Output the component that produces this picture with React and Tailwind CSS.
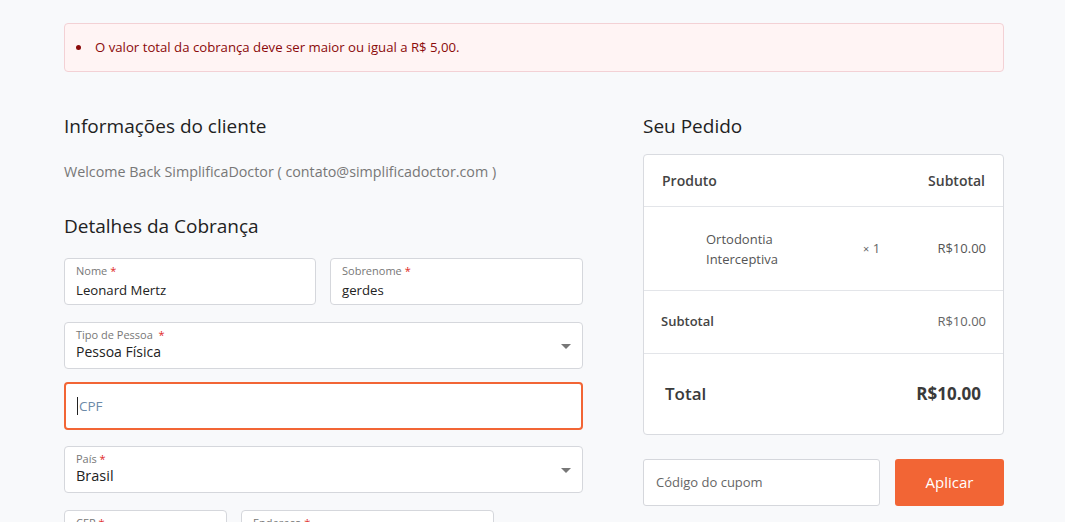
import React from "react";

const font = { fontFamily: '"Open Sans", "Noto Sans", sans-serif' };

function Field({ label, value, className = "", valueClass = "text-[13.2px] mt-[3px]", select = false }) {
  return (
    <div className={`relative h-[47px] rounded-[4px] border border-[#d5d7dc] bg-white px-[11px] pt-[5px] ${className}`}>
      <div className="text-[11px] leading-[14px] text-[#777]">
        {label} <span className="text-[#e0281e]">*</span>
      </div>
      <div className={`leading-[18px] text-[#222] ${valueClass}`}>{value}</div>
      {select && (
        <div className="absolute right-[11px] top-[21px] h-0 w-0 border-x-[5px] border-t-[5px] border-x-transparent border-t-[#777]" />
      )}
    </div>
  );
}

export default function App() {
  return (
    <div className="h-[522px] overflow-hidden bg-[#f8f9fb]" style={font}>
      <div className="px-[64px] pt-[23px]">
        <div className="flex h-[49px] w-[940px] items-center rounded-[4px] border border-[#f3d1d5] bg-[#fff4f4] pl-[11px] text-[13.2px] text-[#8b0a0a]">
          <span className="mr-[14px] inline-block h-[5px] w-[5px] rounded-full bg-[#8b0a0a]" />
          O valor total da cobrança deve ser maior ou igual a R$ 5,00.
        </div>

        <div className="mt-[42px] flex gap-[60px]">
          {/* Left column */}
          <div className="w-[519px]">
            <h2 className="text-[19px] leading-[24px] text-[#222]">Informações do cliente</h2>
            <p className="mt-[24px] text-[14.3px] leading-[20px] text-[#777]">
              Welcome Back SimplificaDoctor ( contato@simplificadoctor.com )
            </p>
            <h2 className="mt-[32px] text-[19px] leading-[24px] text-[#222]">Detalhes da Cobrança</h2>

            <div className="mt-[20px] flex gap-[14px]">
              <Field label="Nome" value="Leonard Mertz" className="w-[252px]" />
              <Field label="Sobrenome" value="gerdes" className="w-[253px]" />
            </div>
            <Field label={<>Tipo de Pessoa&nbsp;</>} value="Pessoa Física" valueClass="text-[14px] mt-[1px]" select className="mt-[17px]" />
            <div className="mt-[13px] flex h-[48px] items-center rounded-[4px] border-2 border-[#f26535] bg-white pl-[11px] text-[13.5px] text-[#6c8aa8]">
              <span className="mr-[1px] inline-block h-[18px] w-px bg-[#222]" />
              CPF
            </div>
            <Field label="País" value="Brasil" valueClass="text-[14.5px] mt-[1px]" select className="mt-[16px]" />
            <div className="mt-[17px] flex gap-[14px]">
              <Field label="CEP" value="" className="w-[163px]" />
              <Field label="Endereço" value="" className="w-[253px]" />
            </div>
          </div>

          {/* Right column */}
          <div className="w-[361px]">
            <h2 className="text-[19px] leading-[24px] text-[#222]">Seu Pedido</h2>
            <div className="mt-[16px] rounded-[4px] border border-[#d9dbe0] bg-white text-[#444]">
              <div className="flex h-[52px] items-center justify-between border-b border-[#e3e5e9] px-[18px] text-[14px] font-semibold">
                <span>Produto</span>
                <span>Subtotal</span>
              </div>
              <div className="flex h-[84px] items-center border-b border-[#e3e5e9] pl-[62px] pr-[17px] text-[13px] text-[#555]">
                <div className="w-[140px] leading-[20px]">
                  Ortodontia<br />Interceptiva
                </div>
                <div className="ml-[17px] text-[#666]">
                  <span className="text-[11px]">×</span> 1
                </div>
                <div className="ml-auto">R$10.00</div>
              </div>
              <div className="flex h-[63px] items-center justify-between border-b border-[#e3e5e9] pl-[17px] pr-[17px] text-[13px]">
                <span className="font-semibold text-[#444]">Subtotal</span>
                <span className="text-[#666]">R$10.00</span>
              </div>
              <div className="flex h-[80px] items-center justify-between pl-[21px] pr-[22px] text-[17px] font-semibold text-[#3a3a3a]">
                <span>Total</span>
                <span className="text-[17px] font-bold">R$10.00</span>
              </div>
            </div>
            <div className="mt-[24px] flex gap-[15px]">
              <div className="flex h-[47px] w-[237px] items-center rounded-[3px] border border-[#d5d7dc] bg-white pl-[12px] text-[13px] text-[#666]">
                Código do cupom
              </div>
              <button className="h-[47px] w-[109px] rounded-[3px] bg-[#f26535] text-[15px] text-white">
                Aplicar
              </button>
            </div>
          </div>
        </div>
      </div>
    </div>
  );
}
